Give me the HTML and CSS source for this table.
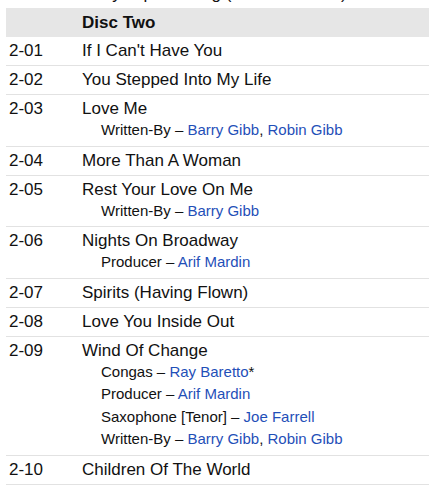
FILE: index.html
```html
<!DOCTYPE html>
<html lang="en">
<head>
<meta charset="utf-8">
<title>Tracklist</title>
<link rel="stylesheet" href="styles.css">
</head>
<body>
<div class="tracklist">
  <div class="row prev">
    <div class="pos">1-10</div>
    <div class="title"><span class="name">Baby Jupiter Song (Bonus Version)</span></div>
  </div>
  <div class="heading"><span>Disc Two</span></div>
  <div class="row">
    <div class="pos">2-01</div>
    <div class="title"><span class="name">If I Can't Have You</span></div>
  </div>
  <div class="row">
    <div class="pos">2-02</div>
    <div class="title"><span class="name">You Stepped Into My Life</span></div>
  </div>
  <div class="row">
    <div class="pos">2-03</div>
    <div class="title">
      <span class="name">Love Me</span>
      <div class="credit">Written-By – <a href="#">Barry Gibb</a>, <a href="#">Robin Gibb</a></div>
    </div>
  </div>
  <div class="row">
    <div class="pos">2-04</div>
    <div class="title"><span class="name">More Than A Woman</span></div>
  </div>
  <div class="row">
    <div class="pos">2-05</div>
    <div class="title">
      <span class="name">Rest Your Love On Me</span>
      <div class="credit">Written-By – <a href="#">Barry Gibb</a></div>
    </div>
  </div>
  <div class="row">
    <div class="pos">2-06</div>
    <div class="title">
      <span class="name">Nights On Broadway</span>
      <div class="credit">Producer – <a href="#">Arif Mardin</a></div>
    </div>
  </div>
  <div class="row">
    <div class="pos">2-07</div>
    <div class="title"><span class="name">Spirits (Having Flown)</span></div>
  </div>
  <div class="row">
    <div class="pos">2-08</div>
    <div class="title"><span class="name">Love You Inside Out</span></div>
  </div>
  <div class="row">
    <div class="pos">2-09</div>
    <div class="title">
      <span class="name">Wind Of Change</span>
      <div class="credit">Congas – <a href="#">Ray Baretto</a>*</div>
      <div class="credit">Producer – <a href="#">Arif Mardin</a></div>
      <div class="credit">Saxophone [Tenor] – <a href="#">Joe Farrell</a></div>
      <div class="credit">Written-By – <a href="#">Barry Gibb</a>, <a href="#">Robin Gibb</a></div>
    </div>
  </div>
  <div class="row">
    <div class="pos">2-10</div>
    <div class="title"><span class="name">Children Of The World</span></div>
  </div>
  <div class="heading"><span>Disc Three</span></div>
</div>
</body>
</html>
```

FILE: styles.css
```css
html, body {
  margin: 0;
  padding: 0;
  background: #fff;
}

body {
  font-family: "Liberation Sans", Arial, sans-serif;
  color: #111;
  overflow: hidden;
}

.tracklist {
  margin-top: -20px;
  padding: 0 1px 0 6px;
}

.row {
  display: grid;
  grid-template-columns: 76px 1fr;
  padding: 4px 0;
  border-bottom: 1px solid #e2e2e2;
}

.row.prev {
  padding-bottom: 3px;
  border-bottom: 1px solid #fff;
}

.row.prev .pos {
  visibility: hidden;
}

.pos {
  padding-left: 3px;
  font-size: 17px;
  line-height: 20px;
}

.name {
  display: block;
  font-size: 17px;
  line-height: 20px;
}

.credit {
  padding-left: 19px;
  font-size: 15px;
  line-height: 22.5px;
}

.credit a {
  color: #1f4fb8;
  text-decoration: none;
}

.heading {
  display: grid;
  grid-template-columns: 76px 1fr;
  background: #e6e6e6;
  padding: 4.5px 0;
  font-size: 17px;
  line-height: 20px;
  font-weight: bold;
}

.heading span {
  grid-column: 2;
}
```
